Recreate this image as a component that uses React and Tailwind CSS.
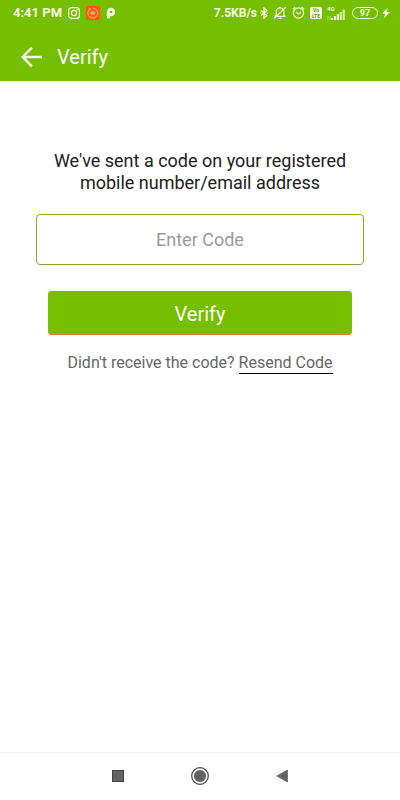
import { useState } from 'react'

function InstagramIcon() {
  return (
    <svg viewBox="0 0 12 12" className="h-3 w-3" fill="none" stroke="currentColor" aria-hidden="true">
      <rect x="0.6" y="0.6" width="10.8" height="10.8" rx="3" strokeWidth="1.2" />
      <circle cx="6" cy="6" r="2.6" strokeWidth="1.2" />
      <circle cx="9.1" cy="2.9" r="0.7" fill="currentColor" stroke="none" />
    </svg>
  )
}

function MiIcon() {
  return (
    <svg viewBox="0 0 14 14" className="h-3.5 w-3.5" fill="none" aria-hidden="true">
      <rect width="14" height="14" rx="1" fill="#fb5b05" />
      <path d="M4 2.9a5 5 0 1 0 3-.9" stroke="#ffc49a" strokeWidth="0.9" />
      <path d="M2.6 2.2l1.8.4-.5 1.7" stroke="#ffc49a" strokeWidth="0.8" />
      <path d="M5.1 8.5V5.9h2.2v2.6M6.2 6.8v1.7M8.7 5.9v2.6" stroke="#ffd9bd" strokeWidth="0.8" />
    </svg>
  )
}

function ParkIcon() {
  return (
    <svg viewBox="0 0 10 12" className="h-3 w-2.5" fill="currentColor" aria-hidden="true">
      <path d="M.8 5a4.2 4.2 0 1 1 4.2 4.2H4V10a1.6 1.6 0 0 1-3.2 0z" />
      <circle cx="5" cy="5" r="1.3" fill="#76be00" />
    </svg>
  )
}

function BluetoothIcon() {
  return (
    <svg viewBox="0 0 8 12" className="h-3 w-2" fill="none" stroke="currentColor" aria-hidden="true">
      <path d="M1 3.4l5.8 5L4 11V1l2.8 2.6L1 8.6" strokeWidth="1.3" />
      <path d="M.2 6h1.2M6.6 6h1.2" strokeWidth="1.2" />
    </svg>
  )
}

function MutedBellIcon() {
  return (
    <svg viewBox="0 0 14 14" className="h-3.5 w-3.5" fill="none" stroke="currentColor" aria-hidden="true">
      <path d="M1.8 10.4h10.4L10.8 9V5.6a3.8 3.8 0 0 0-7.6 0V9z" strokeWidth="1.2" strokeLinejoin="round" />
      <path d="M5.4 12.3h3.2M7 2V.8" strokeWidth="1.3" />
      <path d="M1 12.6L12.8 1.2" strokeWidth="1.3" />
    </svg>
  )
}

function AlarmIcon() {
  return (
    <svg viewBox="0 0 13 13" className="h-[13px] w-[13px]" fill="none" stroke="currentColor" aria-hidden="true">
      <circle cx="6.5" cy="7" r="5.1" strokeWidth="1.2" />
      <path d="M.8 3.2L3.4.9M9.6.9l2.6 2.3" strokeWidth="1.3" />
      <path d="M4.2 6.2l2.3 1.8 2.4-1.8" strokeWidth="1.2" />
    </svg>
  )
}

function VolteIcon() {
  return (
    <span className="flex w-3 flex-col items-center rounded-xs bg-[#f4fbe6] text-[5px] leading-[6px] font-bold text-[#5f9e00]">
      <span>Vo</span>
      <span>LTE</span>
    </span>
  )
}

function SignalIcon() {
  return (
    <span className="flex h-3.5 w-5 items-end">
      <span className="flex flex-col self-stretch text-[6px] leading-[6px] font-bold">
        4G
        <svg viewBox="0 0 4 4" className="mt-1 h-1 w-1" fill="none" stroke="currentColor" aria-hidden="true">
          <path d="M1 0v4M3 0v4" strokeWidth="0.8" opacity="0.6" />
        </svg>
      </span>
      <svg viewBox="0 0 14 11" className="-ml-1 h-[11px] w-3.5" fill="currentColor" aria-hidden="true">
        <path d="M0 9h2.2v2H0zM2.9 7.2h2.2V11H2.9zM5.8 5.2H8V11H5.8z" />
        <path d="M8.7 3h2.2v8H8.7zM11.6.6h2.2V11h-2.2z" opacity="0.75" />
      </svg>
    </span>
  )
}

function StatusBar() {
  return (
    <div className="flex h-6 items-center justify-between pt-px pr-2.5 pl-[13px] text-[#f4fbe6]">
      <div className="flex items-center gap-1.5">
        <span className="text-[13px] leading-4 font-bold">4:41 PM</span>
        <InstagramIcon />
        <MiIcon />
        <ParkIcon />
      </div>
      <div className="flex items-center gap-[5px]">
        <span className="flex items-center gap-[3px]">
          <span className="text-xs leading-4 font-bold">7.5KB/s</span>
          <BluetoothIcon />
        </span>
        <MutedBellIcon />
        <AlarmIcon />
        <VolteIcon />
        <SignalIcon />
        <span className="flex items-center gap-1">
          <span className="flex h-3 w-[26px] items-center justify-center rounded-full border border-current text-[9px] leading-[10px] font-bold">
            97
          </span>
          <svg viewBox="0 0 8 10" className="h-2.5 w-2" fill="currentColor" aria-hidden="true">
            <path d="M5.6 0L0 5.8h3.2L2 10l6-6H4.6z" />
          </svg>
        </span>
      </div>
    </div>
  )
}

function NavBar() {
  return (
    <nav className="flex h-12 items-center justify-center gap-[62px] border-t border-[#f3f3f3] pb-0.5 text-[#636363]">
      <button type="button" aria-label="Recent apps" className="flex w-5 justify-center">
        <svg viewBox="0 0 12 12" className="h-3 w-3">
          <rect x="0.5" y="0.5" width="11" height="11" fill="currentColor" stroke="#444" />
        </svg>
      </button>
      <button type="button" aria-label="Home" className="flex w-5 justify-center">
        <svg viewBox="0 0 18 18" className="h-[18px] w-[18px]">
          <circle cx="9" cy="9" r="8.3" fill="none" stroke="#444" strokeWidth="1.2" />
          <circle cx="9" cy="9" r="6.1" fill="currentColor" />
        </svg>
      </button>
      <button type="button" aria-label="Back" className="flex w-5 justify-center">
        <svg viewBox="0 0 12 14" className="h-3.5 w-3">
          <path d="M11.5 1v12L.8 7z" fill="currentColor" stroke="#555" strokeWidth="0.6" />
        </svg>
      </button>
    </nav>
  )
}

export default function App() {
  const [code, setCode] = useState('')

  return (
    <div className="flex min-h-screen flex-col bg-white font-['Roboto',sans-serif]">
      <header className="bg-[#76be00] text-white">
        <StatusBar />
        <div className="flex h-[57px] items-center gap-3.5 px-5 pt-2">
          <button type="button" aria-label="Go back">
            <svg viewBox="0 0 23 22" className="h-[22px] w-[23px]" fill="none" stroke="#f4fbe6" strokeWidth="2.4">
              <path d="M22 11H3M12 1.6L2.6 11l9.4 9.4" />
            </svg>
          </button>
          <h1 className="text-xl leading-6">Verify</h1>
        </div>
      </header>

      <main className="flex-1 px-9 pt-[69px]">
        <form onSubmit={(e) => e.preventDefault()}>
          <label htmlFor="code" className="block text-center text-lg leading-[22px] text-[#202020]">
            We've sent a code on your registered mobile number/email address
          </label>
          <input
            id="code"
            type="text"
            inputMode="numeric"
            autoComplete="one-time-code"
            placeholder="Enter Code"
            value={code}
            onChange={(e) => setCode(e.target.value)}
            className="mt-5 h-[51px] w-full rounded-sm border border-[#83ab26] text-center text-lg text-[#202020] placeholder:text-[#9a9a9a]"
          />
          <div className="mt-[26px] px-3">
            <button
              type="submit"
              className="h-11 w-full rounded-sm border-y border-[#d6802e] bg-[#76be00] pt-0.5 text-xl text-white"
            >
              Verify
            </button>
          </div>
        </form>
        <p className="mt-4 text-center text-base leading-6 text-[#666]">
          Didn't receive the code?{' '}
          <a href="#resend" className="inline-block border-b border-black leading-[21px]">
            Resend Code
          </a>
        </p>
      </main>

      <NavBar />
    </div>
  )
}
